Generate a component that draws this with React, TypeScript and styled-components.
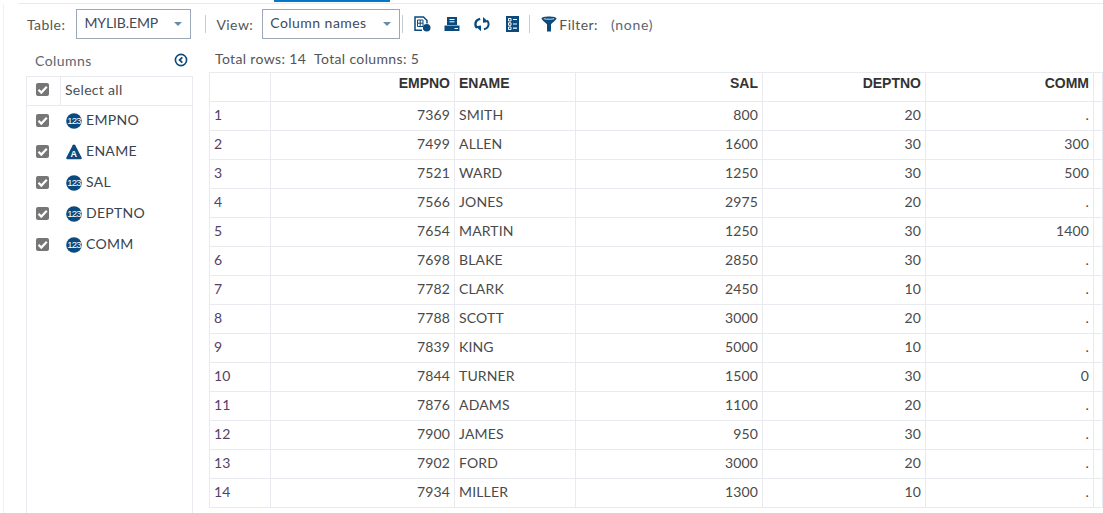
import React from 'react';
import styled, { createGlobalStyle } from 'styled-components';

const GlobalStyle = createGlobalStyle`
  html, body { margin: 0; padding: 0; background: #fff; overflow: hidden; }
  body { font-family: "Lato", "Liberation Sans", sans-serif; color: #4a4a4a; }
`;

const columns = [
  { name: 'EMPNO', type: 'num' },
  { name: 'ENAME', type: 'char' },
  { name: 'SAL', type: 'num' },
  { name: 'DEPTNO', type: 'num' },
  { name: 'COMM', type: 'num' },
];

const rows = [
  [7369, 'SMITH', 800, 20, '.'],
  [7499, 'ALLEN', 1600, 30, 300],
  [7521, 'WARD', 1250, 30, 500],
  [7566, 'JONES', 2975, 20, '.'],
  [7654, 'MARTIN', 1250, 30, 1400],
  [7698, 'BLAKE', 2850, 30, '.'],
  [7782, 'CLARK', 2450, 10, '.'],
  [7788, 'SCOTT', 3000, 20, '.'],
  [7839, 'KING', 5000, 10, '.'],
  [7844, 'TURNER', 1500, 30, 0],
  [7876, 'ADAMS', 1100, 20, '.'],
  [7900, 'JAMES', 950, 30, '.'],
  [7902, 'FORD', 3000, 20, '.'],
  [7934, 'MILLER', 1300, 10, '.'],
];

const Page = styled.div`
  width: 1103px;
  height: 513px;
  overflow: hidden;
  display: flex;
  flex-direction: column;
`;

const TopStrip = styled.div`
  height: 3px;
  margin-left: 18px;
  border-bottom: 1px solid #e8eaed;
  position: relative;
  flex: none;
`;

const ActiveTab = styled.div`
  position: absolute;
  left: 256px;
  top: 0;
  width: 116px;
  height: 2px;
  background: #0478c8;
`;

const Body = styled.div`
  flex: 1;
  display: flex;
  flex-direction: column;
  margin-left: 3px;
  border-left: 1px solid #eef0f2;
  min-height: 0;
`;

const Toolbar = styled.div`
  height: 30px;
  flex: none;
  margin: 5px 0 4px;
  display: flex;
  align-items: center;
  padding-left: 23px;
  font-size: 14px;
  letter-spacing: 0.45px;
`;

const Label = styled.span<{ $gap?: number }>`
  color: #555;
  margin-right: ${p => p.$gap ?? 10}px;
`;

const Select = styled.div<{ $width: number; $spacing: number }>`
  width: ${p => p.$width}px;
  height: 30px;
  box-sizing: border-box;
  border: 1px solid #9ca8b8;
  display: flex;
  align-items: center;
  justify-content: space-between;
  padding: 0 8px 3px 7px;
  color: #3f4a58;
  letter-spacing: ${p => p.$spacing}px;
`;

const Caret = styled.span`
  width: 0;
  height: 0;
  border-left: 4px solid transparent;
  border-right: 4px solid transparent;
  border-top: 4px solid #6a8bab;
  margin-top: 3px;
`;

const Divider = styled.span<{ $left: number; $right: number }>`
  width: 1px;
  height: 18px;
  background: #c9ced4;
  margin: 0 ${p => p.$right}px 0 ${p => p.$left}px;
`;

const IconSlot = styled.span<{ $width: number }>`
  width: ${p => p.$width}px;
  display: flex;
  align-items: center;
  justify-content: flex-start;
`;

const FilterValue = styled.span`
  color: #5a6673;
  margin-left: 13px;
  letter-spacing: 0.7px;
`;

const Main = styled.div`
  flex: 1;
  display: flex;
  min-height: 0;
`;

const Sidebar = styled.div`
  width: 167px;
  margin-left: 22px;
  flex: none;
  display: flex;
  flex-direction: column;
`;

const SidebarHead = styled.div`
  height: 33px;
  box-sizing: border-box;
  display: flex;
  align-items: center;
  justify-content: space-between;
  padding: 1px 5px 0 9px;
  font-size: 14px;
  color: #5c6670;
  letter-spacing: 0.45px;
`;

const ColumnList = styled.div`
  flex: 1;
  border: 1px solid #e8eaef;
  border-bottom: none;
`;

const SelectAll = styled.div`
  height: 28px;
  display: flex;
  border-bottom: 1px solid #e8eaef;
`;

const SelectBox = styled.div`
  width: 34px;
  display: flex;
  align-items: center;
  justify-content: center;
  border-right: 1px solid #e8eaef;
  padding: 0 3px 3px 0;
  box-sizing: border-box;
`;

const SelectText = styled.div`
  display: flex;
  align-items: center;
  padding: 0 0 3px 4px;
  font-size: 14px;
  color: #4a4f58;
  letter-spacing: 0.3px;
`;

const ColumnRow = styled.div`
  height: 31px;
  box-sizing: border-box;
  display: flex;
  align-items: center;
  padding: 0 0 2px 9px;
  font-size: 14px;
  color: #38434f;
  letter-spacing: 0.3px;
`;

const TypeIcon = styled.span`
  display: flex;
  margin: 0 4px 0 17px;
`;

const ColumnName = styled.span`
  padding-bottom: 2px;
`;

const Content = styled.div`
  flex: 1;
  margin-left: 16px;
  min-width: 0;
  display: flex;
  flex-direction: column;
`;

const Totals = styled.div`
  height: 29px;
  box-sizing: border-box;
  padding: 7px 0 0 6px;
  font-size: 14px;
  line-height: 17px;
  color: #555;
  display: flex;
  gap: 8px;
  letter-spacing: 0.35px;
`;

const Grid = styled.div`
  display: grid;
  grid-template-columns: 61px 184px 121px 187px 163px 168px 1fr;
  border-top: 1px solid #e8eaef;
  border-left: 1px solid #e8eaef;
  font-size: 14px;
  color: #444;
`;

const Cell = styled.div<{ $right?: boolean; $head?: boolean }>`
  height: 29px;
  box-sizing: border-box;
  border-right: 1px solid #e8eaef;
  border-bottom: 1px solid #e8eaef;
  display: flex;
  align-items: center;
  justify-content: ${p => (p.$right ? 'flex-end' : 'flex-start')};
  padding: ${p => (p.$head ? '0 4px 9px 4px' : '0 4px 4px 4px')};
  font-family: ${p => (p.$head ? '"Liberation Sans", Arial, sans-serif' : '"Lato", sans-serif')};
  font-weight: ${p => (p.$head ? 700 : 400)};
  color: ${p => (p.$head ? '#333' : '#4a4a4a')};
  letter-spacing: ${p => (p.$head ? '0' : '0.15px')};
`;

const RowNum = styled(Cell)`
  color: #55406a;
`;

const Tick = () => (
  <svg width="13" height="13" viewBox="0 0 13 13">
    <rect width="13" height="13" rx="2" fill="#767676" />
    <path d="M2.5 6.8l2.8 2.8L10.8 3.8" fill="none" stroke="#fff" strokeWidth="2.2" />
  </svg>
);

const NumIcon = () => (
  <svg width="16" height="16" viewBox="0 0 16 16">
    <circle cx="8" cy="8" r="7.8" fill="#0b4a7c" />
    <text x="8" y="11.3" textAnchor="middle" fontSize="9.5" fontFamily="Liberation Sans" letterSpacing="-0.8" fill="#fff">123</text>
  </svg>
);

const CharIcon = () => (
  <svg width="16" height="16" viewBox="0 0 16 16">
    <path d="M8 0.5c.6 0 1 .3 1.3.8l6.3 12.2c.4.8 0 1.7-1 1.7H1.4c-1 0-1.4-.9-1-1.7L6.7 1.3C7 .8 7.4.5 8 .5z" fill="#0b4a7c" />
    <text x="8" y="13" textAnchor="middle" fontSize="9" fontWeight="700" fontFamily="Liberation Sans" fill="#fff">A</text>
  </svg>
);

const CollapseIcon = () => (
  <svg width="14" height="14" viewBox="0 0 14 14">
    <circle cx="7" cy="7" r="5.6" fill="none" stroke="#0b4a7c" strokeWidth="1.6" />
    <path d="M8.3 4.4L5.6 7l2.7 2.6" fill="none" stroke="#0b4a7c" strokeWidth="1.8" />
  </svg>
);

const TableIcon = () => (
  <svg width="17" height="16" viewBox="0 0 17 16">
    <path d="M8 14.3H1V1h8.5l3.5 3.5v3" fill="none" stroke="#0b4a7c" strokeWidth="1.5" />
    <path d="M3.5 4h5.5v6.5H3.5zM6.2 4v6.5M3.5 7.2h5.5" fill="none" stroke="#0b4a7c" strokeWidth="1" />
    <circle cx="12.7" cy="11.7" r="3.8" fill="#0b4a7c" />
  </svg>
);

const PrintIcon = () => (
  <svg width="16" height="16" viewBox="0 0 16 16">
    <path d="M3 1h10v8H3z" fill="#0b4a7c" />
    <path d="M5.5 3.5h5M5.5 5.8h5" stroke="#fff" strokeWidth="1" />
    <path d="M0.5 9.5h15V15H0.5z" fill="#0b4a7c" />
    <path d="M10.5 12.5h3.5" stroke="#fff" strokeWidth="1" />
  </svg>
);

const RefreshIcon = () => (
  <svg width="16" height="16" viewBox="0 0 16 16">
    <path d="M6.2 2.8C2.8 3.6 1.4 6 1.4 8.3c0 1.400.5 2.600 1.500 3.500" fill="none" stroke="#0b4a7c" strokeWidth="2.4" />
    <path d="M1.500 10.200L7 9.400V15.200z" fill="#0b4a7c" />
    <path d="M10 13.200c3-.8 4.600-3 4.600-5.300 0-1.400-.5-2.600-1.500-3.500" fill="none" stroke="#0b4a7c" strokeWidth="2" />
    <path d="M14.500 6L9 6.800V1z" fill="#0b4a7c" />
  </svg>
);

const ListIcon = () => (
  <svg width="13" height="16" viewBox="0 0 13 16">
    <rect width="13" height="16" fill="#0b4a7c" />
    <path d="M2.5 2.500h2.500v2.500H2.500zM2.500 6.800h2.500v2.500H2.500zM2.500 11h2.500v2.500H2.500z" fill="none" stroke="#fff" strokeWidth="1" />
    <path d="M7 3.500h4M7 8h4M7 12.200h4" stroke="#fff" strokeWidth="1.2" />
  </svg>
);

const FunnelIcon = () => (
  <svg width="16" height="16" viewBox="0 0 16 16">
    <path d="M0.5 2.500C0.500 1.200 4 .5 8 .5s7.500.7 7.500 2c0 1.200-4.500 4.500-5.500 6V15.500H6V8.500C5 7 .5 3.700 .5 2.500z" fill="#0b4a7c" />
    <path d="M2.800 2.700C5 3.400 11 3.400 13.200 2.700" fill="none" stroke="#fff" strokeWidth="0.8" />
  </svg>
);

export default function App() {
  return (
    <Page>
      <GlobalStyle />
      <TopStrip>
        <ActiveTab />
      </TopStrip>
      <Body>
        <Toolbar>
          <Label $gap={11}>Table:</Label>
          <Select $width={115} $spacing={-0.1}>
            MYLIB.EMP
            <Caret />
          </Select>
          <Divider $left={14} $right={10} />
          <Label $gap={9}>View:</Label>
          <Select $width={138} $spacing={0.45}>
            Column names
            <Caret />
          </Select>
          <Divider $left={2} $right={11} />
          <IconSlot $width={30}><TableIcon /></IconSlot>
          <IconSlot $width={30}><PrintIcon /></IconSlot>
          <IconSlot $width={32}><RefreshIcon /></IconSlot>
          <IconSlot $width={23}><ListIcon /></IconSlot>
          <Divider $left={0} $right={11} />
          <IconSlot $width={18}><FunnelIcon /></IconSlot>
          <Label $gap={0}>Filter:</Label>
          <FilterValue>(none)</FilterValue>
        </Toolbar>
        <Main>
          <Sidebar>
            <SidebarHead>
              Columns
              <CollapseIcon />
            </SidebarHead>
            <ColumnList>
              <SelectAll>
                <SelectBox><Tick /></SelectBox>
                <SelectText>Select all</SelectText>
              </SelectAll>
              {columns.map(c => (
                <ColumnRow key={c.name}>
                  <Tick />
                  <TypeIcon>{c.type === 'num' ? <NumIcon /> : <CharIcon />}</TypeIcon>
                  <ColumnName>{c.name}</ColumnName>
                </ColumnRow>
              ))}
            </ColumnList>
          </Sidebar>
          <Content>
            <Totals>
              <span>Total rows: 14</span>
              <span>Total columns: 5</span>
            </Totals>
            <Grid>
              <Cell $head />
              <Cell $head $right>EMPNO</Cell>
              <Cell $head>ENAME</Cell>
              <Cell $head $right>SAL</Cell>
              <Cell $head $right>DEPTNO</Cell>
              <Cell $head $right>COMM</Cell>
              <Cell $head />
              {rows.map((r, i) => (
                <React.Fragment key={i}>
                  <RowNum>{i + 1}</RowNum>
                  <Cell $right>{r[0]}</Cell>
                  <Cell>{r[1]}</Cell>
                  <Cell $right>{r[2]}</Cell>
                  <Cell $right>{r[3]}</Cell>
                  <Cell $right>{r[4]}</Cell>
                  <Cell />
                </React.Fragment>
              ))}
            </Grid>
          </Content>
        </Main>
      </Body>
    </Page>
  );
}
